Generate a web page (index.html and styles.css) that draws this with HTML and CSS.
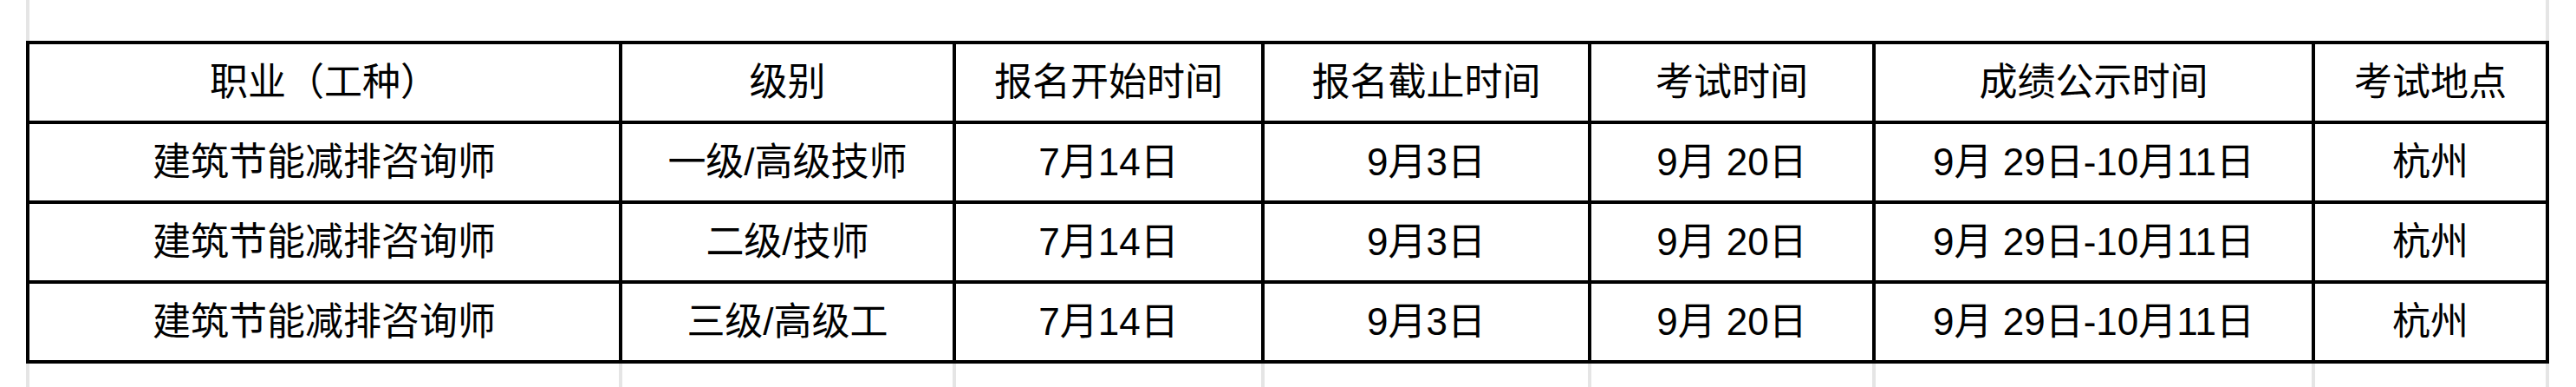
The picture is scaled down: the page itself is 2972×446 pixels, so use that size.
FILE: index.html
```html
<!DOCTYPE html>
<html lang="zh-CN">
<head>
<meta charset="utf-8">
<title>考试安排</title>
<link rel="stylesheet" href="styles.css">
</head>
<body>
<div class="sheet">
  <div class="top-gap"></div>
  <div class="grid table">
    <div class="cell">职业（工种）</div>
    <div class="cell">级别</div>
    <div class="cell">报名开始时间</div>
    <div class="cell">报名截止时间</div>
    <div class="cell">考试时间</div>
    <div class="cell">成绩公示时间</div>
    <div class="cell">考试地点</div>

    <div class="cell">建筑节能减排咨询师</div>
    <div class="cell">一级/高级技师</div>
    <div class="cell">7月14日</div>
    <div class="cell">9月3日</div>
    <div class="cell">9月 20日</div>
    <div class="cell">9月 29日-10月11日</div>
    <div class="cell">杭州</div>

    <div class="cell">建筑节能减排咨询师</div>
    <div class="cell">二级/技师</div>
    <div class="cell">7月14日</div>
    <div class="cell">9月3日</div>
    <div class="cell">9月 20日</div>
    <div class="cell">9月 29日-10月11日</div>
    <div class="cell">杭州</div>

    <div class="cell">建筑节能减排咨询师</div>
    <div class="cell">三级/高级工</div>
    <div class="cell">7月14日</div>
    <div class="cell">9月3日</div>
    <div class="cell">9月 20日</div>
    <div class="cell">9月 29日-10月11日</div>
    <div class="cell">杭州</div>
  </div>
  <div class="grid below">
    <div class="blank"></div>
    <div class="blank"></div>
    <div class="blank"></div>
    <div class="blank"></div>
    <div class="blank"></div>
    <div class="blank"></div>
    <div class="blank"></div>
  </div>
</div>
</body>
</html>
```

FILE: styles.css
```css
html, body {
  margin: 0;
  padding: 0;
  background: #fff;
}

.sheet {
  padding-left: 30px;
  width: 2911px;
  font-family: "Liberation Sans", "Noto Sans CJK SC", sans-serif;
  color: #000;
}

.top-gap {
  height: 47px;
  box-sizing: border-box;
  border-left: 4px solid #e5e5e5;
  border-right: 4px solid #e5e5e5;
}

.grid {
  display: grid;
  grid-template-columns: 684px 385px 356px 377px 328px 507px 270px;
}

.table {
  border-left: 4px solid #000;
  border-top: 4px solid #000;
}

.cell {
  box-sizing: border-box;
  height: 92px;
  border-right: 4px solid #000;
  border-bottom: 4px solid #000;
  display: flex;
  align-items: center;
  justify-content: center;
  font-size: 44px;
  line-height: 1;
  white-space: pre;
}

.below {
  border-left: 4px solid #e5e5e5;
}

.blank {
  height: 27px;
  box-sizing: border-box;
  border-right: 4px solid #e5e5e5;
}
```
